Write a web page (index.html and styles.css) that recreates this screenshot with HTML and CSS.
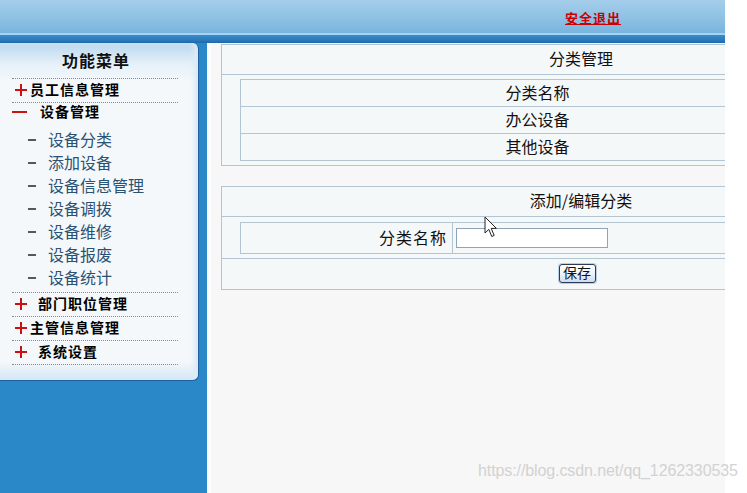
FILE: index.html
```html
<!DOCTYPE html>
<html lang="zh-CN">
<head>
  <meta charset="UTF-8">
  <meta name="viewport" content="width=device-width, initial-scale=1.0">
  <title>设备管理系统</title>
  <link rel="stylesheet" href="styles.css">
</head>
<body>
  <div class="page">
    <!-- top bar -->
    <div class="top">
      <a href="#" class="logout">安全退出</a>
    </div>
    <div class="band"></div>

    <div class="main">
      <!-- left menu -->
      <div class="side">
        <div class="menu">
          <div class="menu-title">功能菜单</div>
          <div class="item plus">员工信息管理</div>
          <div class="group">
            <div class="item minus">设备管理</div>
            <ul class="sub">
              <li>设备分类</li>
              <li>添加设备</li>
              <li>设备信息管理</li>
              <li>设备调拨</li>
              <li>设备维修</li>
              <li>设备报废</li>
              <li>设备统计</li>
            </ul>
          </div>
          <div class="item plus spaced">部门职位管理</div>
          <div class="item plus">主管信息管理</div>
          <div class="item plus spaced">系统设置</div>
        </div>
      </div>

      <!-- content -->
      <div class="content">
        <div class="box">
          <div class="box-head">分类管理</div>
          <table class="grid">
            <tr><td>分类名称</td></tr>
            <tr><td>办公设备</td></tr>
            <tr><td>其他设备</td></tr>
          </table>
        </div>

        <div class="box second">
          <div class="box-head">添加/编辑分类</div>
          <table class="grid form">
            <tr>
              <td class="label">分类名称</td>
              <td class="field"><input type="text" class="text"></td>
            </tr>
          </table>
          <div class="box-foot"><button class="save">保存</button></div>
        </div>
      </div>
    </div>
  </div>

  <svg class="cursor" width="14" height="22" viewBox="0 0 14 22">
    <path d="M1 1 L1 17 L4.8 13.4 L7.8 20.5 L10.2 19.4 L7.2 12.4 L12.4 12.4 Z" fill="#fff" stroke="#222" stroke-width="1"/>
  </svg>
  <div class="watermark">https://blog.csdn.net/qq_1262330535</div>
</body>
</html>
```

FILE: styles.css
```css
body {
  margin: 0;
  background: #fff;
  font-family: "Noto Sans CJK SC", "Liberation Sans", sans-serif;
  color: #111;
}

.page {
  width: 725px;
  height: 493px;
  overflow: hidden;
}

/* header */
.top {
  height: 33px;
  border-bottom: 2px solid #a6d3ef;
  background: linear-gradient(to bottom, #a4cdea, #8cc0e4 60%, #78b4de);
  display: flex;
  justify-content: flex-end;
  align-items: center;
  padding-right: 104px;
}

.logout {
  color: #cc0000;
  font-size: 13px;
  font-weight: bold;
  letter-spacing: 1px;
  text-decoration: underline;
  margin-top: 1px;
}

.band {
  height: 8px;
  background: linear-gradient(to bottom, #3a8ccb, #2877ba 70%, #1f68a8);
}

.main {
  display: flex;
  height: 450px;
}

/* sidebar */
.side {
  width: 207px;
  background: #2a88c8;
}

.menu {
  width: 199px;
  height: 338px;
  box-sizing: border-box;
  padding: 0 20px 0 12px;
  border-right: 1px solid #1d62a0;
  border-bottom: 1px solid #1d62a0;
  border-radius: 0 6px 6px 0;
  background: linear-gradient(to bottom, #bad8ef 0, #e6f1f9 22px, #f5f8fb 40px, #f5f8fb 318px, #d3e7f6 100%);
  box-shadow: inset -4px 0 4px #dbeaf6;
}

.menu-title {
  height: 35px;
  line-height: 35px;
  text-align: center;
  font-size: 16px;
  font-weight: bold;
  letter-spacing: 1px;
  border-bottom: 1px dotted #8c8c8c;
  padding-left: 2px;
}

.item {
  height: 21px;
  line-height: 21px;
  padding-bottom: 2px;
  font-size: 14px;
  font-weight: bold;
  letter-spacing: 1px;
  color: #000;
  border-bottom: 1px dotted #8c8c8c;
  white-space: nowrap;
}

.item::before {
  content: "";
  display: inline-block;
  vertical-align: -1px;
}

.plus::before {
  width: 12px;
  height: 12px;
  margin: 0 3px 0 3px;
  background:
    linear-gradient(#cc1111, #cc1111) center / 12px 2px no-repeat,
    linear-gradient(#cc1111, #cc1111) center / 2px 12px no-repeat;
}

.plus.spaced::before {
  margin-right: 11px;
}

.group {
  border-bottom: 1px dotted #8c8c8c;
}

.group .item {
  border-bottom: none;
  height: 18px;
  line-height: 16px;
}

.minus::before {
  width: 15px;
  height: 2px;
  margin-right: 13px;
  vertical-align: 4px;
  background: #cc1111;
}

.sub {
  list-style: none;
  margin: 0;
  padding: 5px 0 3px 16px;
}

.sub li {
  height: 23px;
  line-height: 23px;
  font-size: 16px;
  color: #2a5273;
  white-space: nowrap;
}

.sub li::before {
  content: "";
  display: inline-block;
  width: 8px;
  height: 2px;
  background: #4a5a66;
  vertical-align: 5px;
  margin-right: 12px;
}

/* content */
.content {
  flex: 1;
  background: #f7f7f7;
  border-left: 4px solid #fcfdfe;
  padding: 1px 0 0 10px;
  overflow: hidden;
}

.box {
  width: 718px;
  border: 1px solid #b3c5d3;
  background: #f5f8f9;
}

.box.second {
  margin-top: 20px;
}

.box-head {
  height: 26px;
  line-height: 26px;
  padding-bottom: 3px;
  text-align: center;
  font-size: 16px;
  border-bottom: 1px solid #b3c5d3;
}

.grid {
  width: 595px;
  margin: 4px 0 4px 18px;
  border-collapse: collapse;
  font-size: 16px;
  line-height: 20px;
}

.grid td {
  border: 1px solid #b3c5d3;
  height: 23px;
  padding: 0 0 3px 0;
  text-align: center;
}

.form {
  margin-top: 5px;
}

.form td {
  height: 28px;
  padding-bottom: 2px;
}

.form .label {
  width: 206px;
  text-align: right;
  padding-right: 5px;
  letter-spacing: 1px;
}

.form .field {
  text-align: left;
  padding: 0 0 0 3px;
}

.text {
  width: 148px;
  height: 16px;
  padding: 1px;
  border: 1px solid #8ea4b8;
  background: #fff;
  display: block;
}

.box-foot {
  height: 30px;
  border-top: 1px solid #b3c5d3;
  display: flex;
  justify-content: center;
  align-items: center;
  padding-right: 8px;
}

.save {
  width: 37px;
  height: 19px;
  padding: 0 0 2px 0;
  font-family: "Noto Sans CJK SC", sans-serif;
  font-size: 14px;
  line-height: 15px;
  color: #111;
  border: 1px solid #2b3a55;
  border-radius: 3px;
  background: linear-gradient(to bottom, #ffffff, #eef3f9 50%, #cfdcec);
  box-shadow: 0 0 0 1px #b9cfe6;
  margin-top: -2px;
}

.cursor {
  position: absolute;
  left: 484px;
  top: 216px;
}

.watermark {
  position: absolute;
  left: 478px;
  top: 462px;
  font-family: "Liberation Sans", sans-serif;
  font-size: 16px;
  color: #d2d2d2;
  letter-spacing: -0.1px;
  white-space: nowrap;
}
```
